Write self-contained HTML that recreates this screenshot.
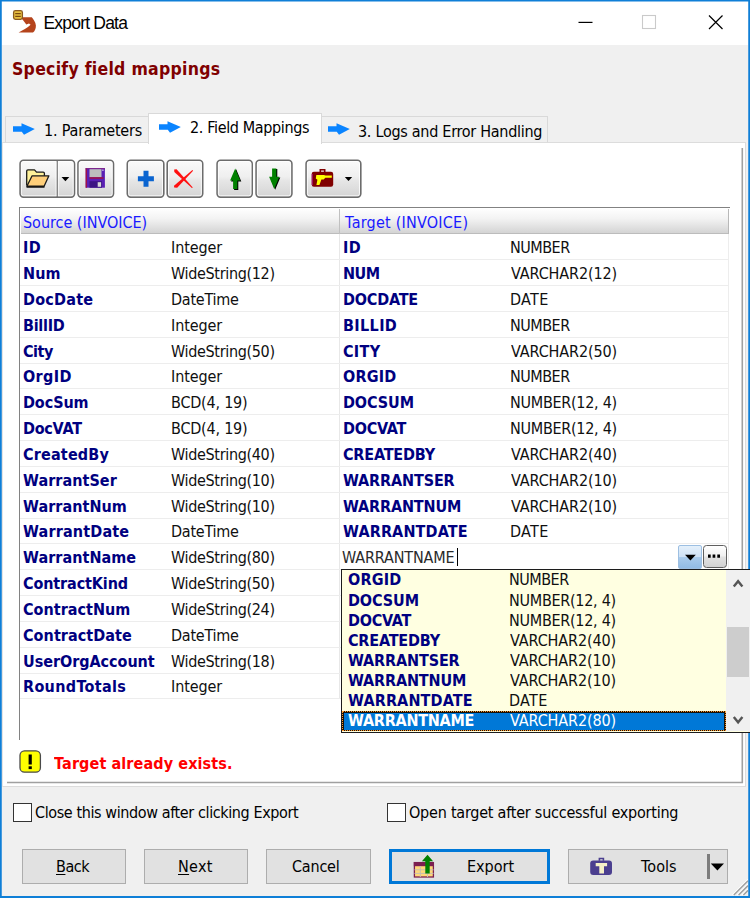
<!DOCTYPE html>
<html><head><meta charset="utf-8"><title>Export Data</title>
<style>
html,body{margin:0;padding:0;}
body{width:750px;height:898px;overflow:hidden;background:#f0f0f0;font-family:"DejaVu Sans","Liberation Sans",sans-serif;font-size:16px;color:#000;position:relative;}
div{box-sizing:border-box;}
.t{position:absolute;white-space:nowrap;transform:scaleX(.9);transform-origin:0 0;}
.tl{transform:none;font-family:"Liberation Sans",sans-serif;}
.a{position:absolute;}
svg{position:absolute;overflow:visible;}
.tab{position:absolute;background:#f0f0f0;border:1px solid #d9d9d9;border-bottom:none;}
.tb{position:absolute;top:159.500px;height:38.500px;border:1.300px solid #707070;border-radius:3.500px;background:linear-gradient(#f6f6f6,#efefef 48%,#e4e4e4 52%,#d6d6d6);box-shadow:inset 0 0 0 1px rgba(255,255,255,.75);}
.sep{position:absolute;left:20px;width:708px;height:1px;background:#ededed;}
.btn{position:absolute;top:849px;height:34.500px;background:#e1e1e1;border:1.200px solid #adadad;}
.cb{position:absolute;top:803px;width:19px;height:19px;background:#fff;border:1.300px solid #333;}
u{text-decoration:underline;text-underline-offset:2px;text-decoration-thickness:1px;}
</style></head><body>
<div class="a" style="left:2px;top:1px;width:746px;height:44px;background:#fff"></div>

<svg style="left:8px;top:6px" width="36" height="32" viewBox="8 6 36 32">
<path d="M20.500 17.300L31.800 17.300C33.500 19.300 35.600 22.300 35.900 25.500C35.900 28.500 35 31 33 32.600L18.600 32.500C22.500 30.500 27.500 28 30.600 24.800L29 23.400L26.300 24.600L23.300 20.500Z" fill="#b5441c"/>
<rect x="13.600" y="10.700" width="8.800" height="8.700" rx="1.800" fill="#e8c040" stroke="#8a5a20" stroke-width="1.300"/>
<path d="M15.200 13.600h5.600M15.200 16.400h5.600" stroke="#7a4a10" stroke-width="1.100"/>
</svg>
<div class="t tl" style="left:43.5px;top:13px;font-size:17.5px;line-height:20px;color:#000;letter-spacing:-0.8px;">Export Data</div>
<svg style="left:570px;top:0" width="180" height="45" viewBox="0 0 180 45">
<path d="M8.500 22.400h14" stroke="#000" stroke-width="1.200"/>
<rect x="72.500" y="15.500" width="13" height="13" fill="none" stroke="#cacaca" stroke-width="1.100"/>
<path d="M139 15.500l13.500 13.500M152.500 15.500l-13.500 13.500" stroke="#000" stroke-width="1.200"/>
</svg>
<div class="t" style="left:12.0px;top:58.5px;font-size:17.5px;line-height:20px;color:#800000;font-weight:bold;letter-spacing:0.291111px;">Specify field mappings</div>
<div class="a" style="left:2px;top:142px;width:744px;height:645px;background:#fff;border:1px solid #dcdcdc;border-left-color:#e6e4e2"></div>
<div class="tab" style="left:5px;top:115.500px;width:144px;height:27.500px;border-bottom:1px solid #dcdcdc"></div>
<div class="tab" style="left:321px;top:115.500px;width:227px;height:27.500px;border-bottom:1px solid #dcdcdc"></div>
<div class="tab" style="left:148px;top:112.500px;width:174px;height:31.500px;background:#fff"></div>
<svg style="left:12.8px;top:123px" width="23" height="12" viewBox="0 0 23 12"><path d="M0 3.200h8.500V0.300L21.800 6L11 11.700L8.800 8.800H0z" fill="#0a84ff"/></svg>
<div class="t" style="left:43.8px;top:121px;font-size:16px;line-height:20px;color:#000;letter-spacing:-0.231111px;">1. Parameters</div>
<svg style="left:159.2px;top:121px" width="23" height="12" viewBox="0 0 23 12"><path d="M0 3.200h8.500V0.300L21.800 6L11 11.700L8.800 8.800H0z" fill="#0a84ff"/></svg>
<div class="t" style="left:190.2px;top:118px;font-size:16px;line-height:20px;color:#000;letter-spacing:-0.41px;">2. Field Mappings</div>
<svg style="left:328px;top:123px" width="23" height="12" viewBox="0 0 23 12"><path d="M0 3.200h8.500V0.300L21.800 6L11 11.700L8.800 8.800H0z" fill="#0a84ff"/></svg>
<div class="t" style="left:358.0px;top:122px;font-size:16px;line-height:20px;color:#000;letter-spacing:-0.32px;">3. Logs and Error Handling</div>
<svg style="left:0;top:140px" width="750" height="650" viewBox="0 140 750 650"><path d="M742.300 148V783.200M7 782.500H743.100" fill="none" stroke="#a0a0a0" stroke-width="1.600"/></svg>
<svg style="left:0;top:150px" width="375" height="60" viewBox="0 150 375 60"><defs><linearGradient id="bg" x1="0" y1="0" x2="0" y2="1"><stop offset="0" stop-color="#fafafa"/><stop offset="0.45" stop-color="#efefef"/><stop offset="0.55" stop-color="#e6e6e6"/><stop offset="1" stop-color="#d4d4d4"/></linearGradient></defs><rect x="20.10" y="160.30" width="54.40" height="36.80" rx="3.400" fill="url(#bg)" stroke="#6c6c6c" stroke-width="1.6"/><rect x="21.40" y="161.60" width="51.80" height="34.20" rx="2.200" fill="none" stroke="#fff" stroke-opacity="0.800" stroke-width="1"/><rect x="78.00" y="160.30" width="35.50" height="36.80" rx="3.400" fill="url(#bg)" stroke="#6c6c6c" stroke-width="1.6"/><rect x="79.30" y="161.60" width="32.90" height="34.20" rx="2.200" fill="none" stroke="#fff" stroke-opacity="0.800" stroke-width="1"/><rect x="127.30" y="160.30" width="36.50" height="36.80" rx="3.400" fill="url(#bg)" stroke="#6c6c6c" stroke-width="1.6"/><rect x="128.60" y="161.60" width="33.90" height="34.20" rx="2.200" fill="none" stroke="#fff" stroke-opacity="0.800" stroke-width="1"/><rect x="167.20" y="160.30" width="35.50" height="36.80" rx="3.400" fill="url(#bg)" stroke="#6c6c6c" stroke-width="1.6"/><rect x="168.50" y="161.60" width="32.90" height="34.20" rx="2.200" fill="none" stroke="#fff" stroke-opacity="0.800" stroke-width="1"/><rect x="217.10" y="160.30" width="35.10" height="36.80" rx="3.400" fill="url(#bg)" stroke="#6c6c6c" stroke-width="1.6"/><rect x="218.40" y="161.60" width="32.50" height="34.20" rx="2.200" fill="none" stroke="#fff" stroke-opacity="0.800" stroke-width="1"/><rect x="256.10" y="160.30" width="35.80" height="36.80" rx="3.400" fill="url(#bg)" stroke="#6c6c6c" stroke-width="1.6"/><rect x="257.40" y="161.60" width="33.20" height="34.20" rx="2.200" fill="none" stroke="#fff" stroke-opacity="0.800" stroke-width="1"/><rect x="306.10" y="160.30" width="54.70" height="36.80" rx="3.400" fill="url(#bg)" stroke="#6c6c6c" stroke-width="1.6"/><rect x="307.40" y="161.60" width="52.10" height="34.20" rx="2.200" fill="none" stroke="#fff" stroke-opacity="0.800" stroke-width="1"/><path d="M57.200 160.500v36.500" stroke="#6c6c6c" stroke-width="1.300"/><path d="M56 161.500v34.500M58.400 161.500v34.500" stroke="#fff" stroke-opacity="0.700" stroke-width="1"/></svg>
<svg style="left:0;top:150px" width="375" height="60" viewBox="0 150 375 60">
<!-- open folder -->
<path d="M26.700 185.500V171q0-1.200 1.200-1.200h6.600l2 2.400h6.700q1.200 0 1.200 1.200v2.600" fill="#fff29a" stroke="#1a1a1a" stroke-width="1.300" stroke-linejoin="round"/>
<path d="M26.900 186.200l5.200-10.400h16.800l-4.800 10.400z" fill="#ffcf7a" stroke="#1a1a1a" stroke-width="1.300" stroke-linejoin="round"/>
<path d="M26.500 187h18" stroke="#000" stroke-width="1.400"/>
<path d="M61.500 177h7.800l-3.900 4.300z" fill="#000"/>
<!-- save -->
<rect x="85.700" y="168.300" width="19.200" height="19.400" fill="#5a1fb4"/>
<path d="M86.300 168.300v19.400" stroke="#a01048" stroke-width="1.400"/>
<path d="M85.600 168.700h19.400" stroke="#7a1a80" stroke-width="1"/>
<rect x="89.500" y="169.200" width="12" height="8" fill="#bdbdbd"/>
<rect x="89.500" y="177.200" width="14" height="1.600" fill="#a01048"/>
<rect x="89.500" y="181.200" width="12.500" height="6.500" fill="#3c1484"/>
<rect x="97.700" y="182.200" width="3.400" height="4.600" fill="#d8d8d8"/>
<rect x="102.300" y="169.500" width="1.200" height="1.400" fill="#e8d8f8"/>
<!-- plus -->
<path d="M137.900 178.800h16M146 170.800v16" stroke="#0a64d0" stroke-width="5"/>
<!-- cross -->
<path d="M174.200 169.600l2.400-.3L192.800 187.500l-.9.500L174.300 172z" fill="#ff1010"/>
<path d="M192.400 169.900l.7.800L177.200 187.800l-3-.2l-.2-1.900z" fill="#ff1010"/>
<!-- up -->
<path d="M235.200 168.400l5.100 12.300h-3v8.400h-4.200v-8.400h-3z" fill="#000" transform="translate(1,0.800)"/>
<path d="M235.200 168.400l5.100 12.200h-3v8.300h-4.200v-8.300h-3z" fill="#008000"/>
<!-- down -->
<path d="M274.200 189.300l5.100-12.300h-3v-8.400h-4.200v8.400h-3z" fill="#000" transform="translate(1,0.400)"/>
<path d="M274.200 189l5.100-12.200h-3v-8.300h-4.200v8.300h-3z" fill="#008000"/>
<!-- tools -->
<rect x="311.700" y="171.800" width="21.500" height="15" rx="2.200" fill="#800000"/>
<path d="M320.300 172v-2.200h4.400V172" fill="none" stroke="#800000" stroke-width="1.600"/>
<path d="M312.400 174v11" stroke="#a01060" stroke-width="1.200"/>
<path d="M316.300 174.900h7.600l1.600.6h6.300v2.200h-6.500l-1.600 1.900h-2.300l-2 5.500h-3l1-5.400l-1.600-1.200z" fill="#ffff00"/>
<path d="M344.800 177h7.400l-3.700 4.100z" fill="#000"/>
</svg>
<div class="a" style="left:19px;top:207px;width:711px;height:533px;border-left:1.500px solid #828282;border-top:1.500px solid #828282;background:#fff"></div>
<div class="a" style="left:20.500px;top:208.500px;width:708px;height:25.500px;background:linear-gradient(#fefefe,#f3f3f3 40%,#d4d4d4);border-bottom:1px solid #bcbcbc"></div>
<div class="a" style="left:339px;top:208.500px;width:1px;height:25px;background:#c0c0c0"></div>
<div class="a" style="left:727.500px;top:208.500px;width:1px;height:25px;background:#b8b8b8"></div>
<div class="a" style="left:727.500px;top:234px;width:1px;height:335px;background:#ededed"></div>
<div class="a" style="left:339px;top:234px;width:1px;height:465px;background:#e8e8e8"></div>
<div class="t" style="left:22.9px;top:213px;font-size:16px;line-height:20px;color:#1a1aff;letter-spacing:-0.03px;">Source (INVOICE)</div>
<div class="t" style="left:344.7px;top:213px;font-size:16px;line-height:20px;color:#1a1aff;letter-spacing:0.244444px;">Target (INVOICE)</div>
<div class="sep" style="top:259.19px"></div>
<div class="t" style="left:22.7px;top:238px;font-size:16px;line-height:20px;color:#000080;font-weight:bold;letter-spacing:0.333333px;">ID</div>
<div class="t" style="left:171.3px;top:238px;font-size:16px;line-height:20px;color:#101010;letter-spacing:-0.13px;">Integer</div>
<div class="t" style="left:343.4px;top:238px;font-size:16px;line-height:20px;color:#000080;font-weight:bold;letter-spacing:0.333333px;">ID</div>
<div class="t" style="left:510.2px;top:238px;font-size:16px;line-height:20px;color:#101010;letter-spacing:-0.555556px;">NUMBER</div>
<div class="sep" style="top:285.03px"></div>
<div class="t" style="left:22.7px;top:264px;font-size:16px;line-height:20px;color:#000080;font-weight:bold;letter-spacing:0.111111px;">Num</div>
<div class="t" style="left:171.1px;top:264px;font-size:16px;line-height:20px;color:#101010;letter-spacing:-0.375556px;">WideString(12)</div>
<div class="t" style="left:343.4px;top:264px;font-size:16px;line-height:20px;color:#000080;font-weight:bold;letter-spacing:-0.5px;">NUM</div>
<div class="t" style="left:511.2px;top:264px;font-size:16px;line-height:20px;color:#101010;letter-spacing:-0.141111px;">VARCHAR2(12)</div>
<div class="sep" style="top:310.87px"></div>
<div class="t" style="left:22.7px;top:290px;font-size:16px;line-height:20px;color:#000080;font-weight:bold;letter-spacing:0.258889px;">DocDate</div>
<div class="t" style="left:171.3px;top:290px;font-size:16px;line-height:20px;color:#101010;letter-spacing:-0.285556px;">DateTime</div>
<div class="t" style="left:343.4px;top:290px;font-size:16px;line-height:20px;color:#000080;font-weight:bold;letter-spacing:-0.222222px;">DOCDATE</div>
<div class="t" style="left:510.2px;top:290px;font-size:16px;line-height:20px;color:#101010;letter-spacing:0.296667px;">DATE</div>
<div class="sep" style="top:336.71px"></div>
<div class="t" style="left:22.7px;top:316px;font-size:16px;line-height:20px;color:#000080;font-weight:bold;letter-spacing:-0.311111px;">BillID</div>
<div class="t" style="left:171.3px;top:316px;font-size:16px;line-height:20px;color:#101010;letter-spacing:-0.13px;">Integer</div>
<div class="t" style="left:343.4px;top:316px;font-size:16px;line-height:20px;color:#000080;font-weight:bold;letter-spacing:0.4px;">BILLID</div>
<div class="t" style="left:510.2px;top:316px;font-size:16px;line-height:20px;color:#101010;letter-spacing:-0.555556px;">NUMBER</div>
<div class="sep" style="top:362.55px"></div>
<div class="t" style="left:22.7px;top:342px;font-size:16px;line-height:20px;color:#000080;font-weight:bold;letter-spacing:-0.5px;">City</div>
<div class="t" style="left:171.1px;top:342px;font-size:16px;line-height:20px;color:#101010;letter-spacing:-0.375556px;">WideString(50)</div>
<div class="t" style="left:343.4px;top:342px;font-size:16px;line-height:20px;color:#000080;font-weight:bold;letter-spacing:0.333333px;">CITY</div>
<div class="t" style="left:511.2px;top:342px;font-size:16px;line-height:20px;color:#101010;letter-spacing:-0.141111px;">VARCHAR2(50)</div>
<div class="sep" style="top:388.39px"></div>
<div class="t" style="left:22.7px;top:367px;font-size:16px;line-height:20px;color:#000080;font-weight:bold;letter-spacing:0.388889px;">OrgID</div>
<div class="t" style="left:171.3px;top:367px;font-size:16px;line-height:20px;color:#101010;letter-spacing:-0.13px;">Integer</div>
<div class="t" style="left:343.4px;top:367px;font-size:16px;line-height:20px;color:#000080;font-weight:bold;letter-spacing:0.222222px;">ORGID</div>
<div class="t" style="left:510.2px;top:367px;font-size:16px;line-height:20px;color:#101010;letter-spacing:-0.555556px;">NUMBER</div>
<div class="sep" style="top:414.23px"></div>
<div class="t" style="left:22.7px;top:393px;font-size:16px;line-height:20px;color:#000080;font-weight:bold;letter-spacing:-0.0888889px;">DocSum</div>
<div class="t" style="left:171.3px;top:393px;font-size:16px;line-height:20px;color:#101010;letter-spacing:-0.246667px;">BCD(4, 19)</div>
<div class="t" style="left:343.4px;top:393px;font-size:16px;line-height:20px;color:#000080;font-weight:bold;letter-spacing:-0.0888889px;">DOCSUM</div>
<div class="t" style="left:510.2px;top:393px;font-size:16px;line-height:20px;color:#101010;letter-spacing:-0.314444px;">NUMBER(12, 4)</div>
<div class="sep" style="top:440.07px"></div>
<div class="t" style="left:22.7px;top:419px;font-size:16px;line-height:20px;color:#000080;font-weight:bold;letter-spacing:-0.311111px;">DocVAT</div>
<div class="t" style="left:171.3px;top:419px;font-size:16px;line-height:20px;color:#101010;letter-spacing:-0.246667px;">BCD(4, 19)</div>
<div class="t" style="left:343.4px;top:419px;font-size:16px;line-height:20px;color:#000080;font-weight:bold;letter-spacing:-0.311111px;">DOCVAT</div>
<div class="t" style="left:510.2px;top:419px;font-size:16px;line-height:20px;color:#101010;letter-spacing:-0.314444px;">NUMBER(12, 4)</div>
<div class="sep" style="top:465.91px"></div>
<div class="t" style="left:22.7px;top:445px;font-size:16px;line-height:20px;color:#000080;font-weight:bold;letter-spacing:0.194444px;">CreatedBy</div>
<div class="t" style="left:171.1px;top:445px;font-size:16px;line-height:20px;color:#101010;letter-spacing:-0.375556px;">WideString(40)</div>
<div class="t" style="left:343.4px;top:445px;font-size:16px;line-height:20px;color:#000080;font-weight:bold;letter-spacing:-0.222222px;">CREATEDBY</div>
<div class="t" style="left:511.2px;top:445px;font-size:16px;line-height:20px;color:#101010;letter-spacing:-0.141111px;">VARCHAR2(40)</div>
<div class="sep" style="top:491.75px"></div>
<div class="t" style="left:22.5px;top:471px;font-size:16px;line-height:20px;color:#000080;font-weight:bold;letter-spacing:0.0488889px;">WarrantSer</div>
<div class="t" style="left:171.1px;top:471px;font-size:16px;line-height:20px;color:#101010;letter-spacing:-0.375556px;">WideString(10)</div>
<div class="t" style="left:343.2px;top:471px;font-size:16px;line-height:20px;color:#000080;font-weight:bold;letter-spacing:-0.147778px;">WARRANTSER</div>
<div class="t" style="left:511.2px;top:471px;font-size:16px;line-height:20px;color:#101010;letter-spacing:-0.141111px;">VARCHAR2(10)</div>
<div class="sep" style="top:517.59px"></div>
<div class="t" style="left:22.5px;top:497px;font-size:16px;line-height:20px;color:#000080;font-weight:bold;letter-spacing:0.0488889px;">WarrantNum</div>
<div class="t" style="left:171.1px;top:497px;font-size:16px;line-height:20px;color:#101010;letter-spacing:-0.375556px;">WideString(10)</div>
<div class="t" style="left:343.2px;top:497px;font-size:16px;line-height:20px;color:#000080;font-weight:bold;letter-spacing:-0.173333px;">WARRANTNUM</div>
<div class="t" style="left:511.2px;top:497px;font-size:16px;line-height:20px;color:#101010;letter-spacing:-0.141111px;">VARCHAR2(10)</div>
<div class="sep" style="top:543.43px"></div>
<div class="t" style="left:22.5px;top:522px;font-size:16px;line-height:20px;color:#000080;font-weight:bold;letter-spacing:0.177778px;">WarrantDate</div>
<div class="t" style="left:171.3px;top:522px;font-size:16px;line-height:20px;color:#101010;letter-spacing:-0.285556px;">DateTime</div>
<div class="t" style="left:343.2px;top:522px;font-size:16px;line-height:20px;color:#000080;font-weight:bold;letter-spacing:0.155556px;">WARRANTDATE</div>
<div class="t" style="left:510.2px;top:522px;font-size:16px;line-height:20px;color:#101010;letter-spacing:0.296667px;">DATE</div>
<div class="sep" style="top:569.27px"></div>
<div class="t" style="left:22.5px;top:548px;font-size:16px;line-height:20px;color:#000080;font-weight:bold;letter-spacing:0.0444444px;">WarrantName</div>
<div class="t" style="left:171.1px;top:548px;font-size:16px;line-height:20px;color:#101010;letter-spacing:-0.375556px;">WideString(80)</div>
<div class="sep" style="top:595.11px"></div>
<div class="t" style="left:22.7px;top:574px;font-size:16px;line-height:20px;color:#000080;font-weight:bold;letter-spacing:-0.141111px;">ContractKind</div>
<div class="t" style="left:171.1px;top:574px;font-size:16px;line-height:20px;color:#101010;letter-spacing:-0.375556px;">WideString(50)</div>
<div class="sep" style="top:620.95px"></div>
<div class="t" style="left:22.7px;top:600px;font-size:16px;line-height:20px;color:#000080;font-weight:bold;letter-spacing:0.0222222px;">ContractNum</div>
<div class="t" style="left:171.1px;top:600px;font-size:16px;line-height:20px;color:#101010;letter-spacing:-0.375556px;">WideString(24)</div>
<div class="sep" style="top:646.79px"></div>
<div class="t" style="left:22.7px;top:626px;font-size:16px;line-height:20px;color:#000080;font-weight:bold;letter-spacing:0.0611111px;">ContractDate</div>
<div class="t" style="left:171.3px;top:626px;font-size:16px;line-height:20px;color:#101010;letter-spacing:-0.285556px;">DateTime</div>
<div class="sep" style="top:672.63px"></div>
<div class="t" style="left:22.7px;top:652px;font-size:16px;line-height:20px;color:#000080;font-weight:bold;letter-spacing:-0.0511111px;">UserOrgAccount</div>
<div class="t" style="left:171.1px;top:652px;font-size:16px;line-height:20px;color:#101010;letter-spacing:-0.375556px;">WideString(18)</div>
<div class="sep" style="top:698.47px"></div>
<div class="t" style="left:22.7px;top:677px;font-size:16px;line-height:20px;color:#000080;font-weight:bold;letter-spacing:0.355556px;">RoundTotals</div>
<div class="t" style="left:171.3px;top:677px;font-size:16px;line-height:20px;color:#101010;letter-spacing:-0.13px;">Integer</div>
<div class="t" style="left:342.4px;top:548px;font-size:16px;line-height:20px;color:#2a2a2a;letter-spacing:-0.2px;">WARRANTNAME</div>
<div class="a" style="left:457px;top:548px;width:1.200px;height:17.500px;background:#000"></div>
<div class="a" style="left:678.200px;top:544.800px;width:23.400px;height:24px;border:1px solid #9dbfe2;border-radius:2px;background:linear-gradient(#e4f0fb,#cfe2f6 48%,#a9cbec 52%,#92bbe4)"></div>
<div class="a" style="left:703px;top:545px;width:23.800px;height:23.300px;border:1.300px solid #606060;border-radius:3.500px;background:linear-gradient(#ffffff,#f0f0f0 48%,#e2e2e2 52%,#d2d2d2)"></div>
<svg style="left:670px;top:540px" width="70" height="30" viewBox="670 540 70 30"><path d="M685 554.800h10.800l-5.400 5.800z" fill="#000"/><path d="M708 556.100h2.700M712.600 556.100h2.700M717.300 556.100h2.700" stroke="#000" stroke-width="3.200"/></svg>
<div class="a" style="left:341px;top:569px;width:409px;height:163.500px;background:#ffffe1;border:1.400px solid #1c1c1c;border-right:none"></div>
<div class="a" style="left:726.300px;top:570.400px;width:24px;height:160.800px;background:#f0f0f0"></div>
<div class="a" style="left:727.200px;top:626.500px;width:21.800px;height:50.200px;background:#cdcdcd"></div>
<svg style="left:726px;top:570px" width="24" height="162" viewBox="726 570 24 162"><path d="M733.800 586.500l4.300-5.300 4.300 5.300" fill="none" stroke="#555" stroke-width="2.400"/><path d="M733.800 717l4.300 5.300 4.300-5.300" fill="none" stroke="#555" stroke-width="2.400"/></svg>
<div class="t" style="left:347.8px;top:570px;font-size:16px;line-height:20px;color:#000080;font-weight:bold;letter-spacing:0.222222px;">ORGID</div>
<div class="t" style="left:509.0px;top:570px;font-size:16px;line-height:20px;color:#101010;letter-spacing:-0.555556px;">NUMBER</div>
<div class="t" style="left:347.8px;top:591px;font-size:16px;line-height:20px;color:#000080;font-weight:bold;letter-spacing:-0.0888889px;">DOCSUM</div>
<div class="t" style="left:509.0px;top:591px;font-size:16px;line-height:20px;color:#101010;letter-spacing:-0.314444px;">NUMBER(12, 4)</div>
<div class="t" style="left:347.8px;top:611px;font-size:16px;line-height:20px;color:#000080;font-weight:bold;letter-spacing:-0.311111px;">DOCVAT</div>
<div class="t" style="left:509.0px;top:611px;font-size:16px;line-height:20px;color:#101010;letter-spacing:-0.314444px;">NUMBER(12, 4)</div>
<div class="t" style="left:347.8px;top:631px;font-size:16px;line-height:20px;color:#000080;font-weight:bold;letter-spacing:-0.222222px;">CREATEDBY</div>
<div class="t" style="left:510.0px;top:631px;font-size:16px;line-height:20px;color:#101010;letter-spacing:-0.141111px;">VARCHAR2(40)</div>
<div class="t" style="left:347.6px;top:651px;font-size:16px;line-height:20px;color:#000080;font-weight:bold;letter-spacing:-0.147778px;">WARRANTSER</div>
<div class="t" style="left:510.0px;top:651px;font-size:16px;line-height:20px;color:#101010;letter-spacing:-0.141111px;">VARCHAR2(10)</div>
<div class="t" style="left:347.6px;top:671px;font-size:16px;line-height:20px;color:#000080;font-weight:bold;letter-spacing:-0.173333px;">WARRANTNUM</div>
<div class="t" style="left:510.0px;top:671px;font-size:16px;line-height:20px;color:#101010;letter-spacing:-0.141111px;">VARCHAR2(10)</div>
<div class="t" style="left:347.6px;top:691px;font-size:16px;line-height:20px;color:#000080;font-weight:bold;letter-spacing:0.155556px;">WARRANTDATE</div>
<div class="t" style="left:509.0px;top:691px;font-size:16px;line-height:20px;color:#101010;letter-spacing:0.296667px;">DATE</div>
<div class="a" style="left:342.400px;top:711.200px;width:383.600px;height:20.300px;background:#1a1208;border:1.500px dotted #ff9a30"></div>
<div class="a" style="left:343.900px;top:712.700px;width:380.600px;height:17.300px;background:#0078d7"></div>
<div class="t" style="left:347.6px;top:711px;font-size:16px;line-height:20px;color:#fff;font-weight:bold;letter-spacing:-0.288889px;">WARRANTNAME</div>
<div class="t" style="left:510.0px;top:711px;font-size:16px;line-height:20px;color:#fff;letter-spacing:-0.141111px;">VARCHAR2(80)</div>
<svg style="left:18px;top:749px" width="26" height="26" viewBox="18 749 26 26"><rect x="20" y="750.800" width="20.400" height="21.400" rx="4.500" fill="#ffff00" stroke="#4a4a4a" stroke-width="1.300"/><path d="M30.200 754.500v10" stroke="#000" stroke-width="3.200"/><rect x="28.600" y="766.300" width="3.200" height="2.800" fill="#000"/></svg>
<div class="t" style="left:54.0px;top:754px;font-size:16.01px;line-height:20px;color:#ff0000;font-weight:bold;letter-spacing:0.116667px;">Target already exists.</div>
<div class="cb" style="left:13px"></div>
<div class="t" style="left:35.0px;top:803px;font-size:16px;line-height:20px;color:#000;letter-spacing:-0.438889px;">Close this window after clicking Export</div>
<div class="cb" style="left:386.500px"></div>
<div class="t" style="left:408.5px;top:803px;font-size:16px;line-height:20px;color:#000;letter-spacing:-0.257778px;">Open target after successful exporting</div>
<div class="btn" style="left:21.700px;width:104.500px"></div>
<div class="btn" style="left:143.700px;width:104.500px"></div>
<div class="btn" style="left:266px;width:104.800px"></div>
<div class="btn" style="left:389.300px;top:849px;width:161px;height:34.500px;border:3.200px solid #0078d7"></div>
<div class="btn" style="left:567.800px;width:160.700px"></div>
<div class="t" style="left:56.2px;top:857px;font-size:16px;line-height:20px;color:#000;letter-spacing:-0.5px;"><u>B</u>ack</div>
<div class="t" style="left:178.3px;top:857px;font-size:16px;line-height:20px;color:#000;letter-spacing:0.333333px;"><u>N</u>ext</div>
<div class="t" style="left:292.3px;top:857px;font-size:16px;line-height:20px;color:#000;letter-spacing:-0.222222px;">Cancel</div>
<div class="t" style="left:467.2px;top:857px;font-size:16px;line-height:20px;color:#000;">Export</div>
<div class="t" style="left:640.7px;top:857px;font-size:16px;line-height:20px;color:#000;">Tools</div>
<svg style="left:400px;top:845px" width="50" height="45" viewBox="400 845 50 45">
<rect x="414.400" y="862.600" width="19" height="14.400" fill="#ffd878" stroke="#7b1f50" stroke-width="1.300"/>
<rect x="413.800" y="862" width="20.200" height="4.200" fill="#7b1f50"/>
<path d="M414.500 869.800h19M414.500 873.400h19M420.300 866v11M427.500 866v11" stroke="#c8c0b0" stroke-width="1"/>
<path d="M427.500 854.800l5.600 6.400h-3.400v12.400h-4.400v-12.400h-3.400z" fill="#008000"/></svg>
<svg style="left:580px;top:850px" width="40" height="32" viewBox="580 850 40 32">
<rect x="590.200" y="860.500" width="21.800" height="14.500" rx="3" fill="#4b3f8f"/>
<path d="M599.400 860.800v-2.300h4V860.800" fill="none" stroke="#4b3f8f" stroke-width="1.600"/>
<path d="M595.700 863.100h11.400v3.200h-3.100v7.300h-4.700v-7.300h-3.600z" fill="#f5f0c8"/></svg>
<div class="a" style="left:707.200px;top:853.500px;width:2.600px;height:25.500px;background:#7c7c7c"></div>
<svg style="left:709px;top:860px" width="16" height="14" viewBox="0 0 16 14"><path d="M1.800 3.400h13.200l-6.600 7.200z" fill="#000"/></svg>
<svg style="left:730px;top:878px" width="18" height="18" viewBox="0 0 18 18"><path d="M18 1.500L2.500 17M18 6.300L7.300 17M18 11.100L12.100 17" stroke="#fff" stroke-width="1.400"/><path d="M18 2.800L3.800 17M18 7.600L8.600 17M18 12.400L13.400 17" stroke="#a0a0a0" stroke-width="1.500"/></svg>

<svg style="left:0;top:0" width="750" height="898" viewBox="0 0 750 898"><path d="M0 0H750V898H0ZM1.750 1.450V895.900H748.250V1.450Z" fill="#0f7fd7" fill-rule="evenodd"/></svg>
<div class="a" style="left:748px;top:569px;width:2px;height:163.500px;background:#f0f0f0;border-top:1.400px solid #1c1c1c;border-bottom:1.400px solid #1c1c1c"></div>
<div class="a" style="left:748px;top:626.500px;width:1px;height:50.200px;background:#cdcdcd"></div>
</body></html>
